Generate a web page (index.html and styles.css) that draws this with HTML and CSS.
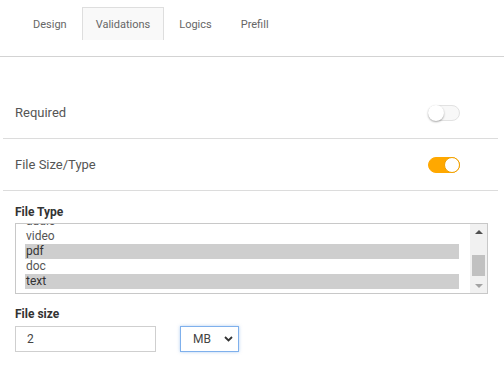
FILE: index.html
```html
<!DOCTYPE html>
<html>
<head>
<meta charset="utf-8">
<link rel="stylesheet" href="styles.css">
</head>
<body>
<div class="panel">
  <nav class="tabs">
    <div class="tab">Design</div>
    <div class="tab active">Validations</div>
    <div class="tab">Logics</div>
    <div class="tab">Prefill</div>
  </nav>
  <div class="rows">
    <div class="row">
      <span class="row-label">Required</span>
      <span class="toggle"><span class="knob"></span></span>
    </div>
    <div class="row">
      <span class="row-label">File Size/Type</span>
      <span class="toggle on"><span class="knob"></span></span>
    </div>
  </div>
  <div class="fields">
    <div class="field-label">File Type</div>
    <div class="listbox">
      <div class="list-view">
        <div class="list-items">
          <div class="opt">audio</div>
          <div class="opt">video</div>
          <div class="opt sel">pdf</div>
          <div class="opt">doc</div>
          <div class="opt sel">text</div>
        </div>
      </div>
      <div class="scrollbar">
        <span class="arrow up"></span>
        <span class="track"><span class="thumb"></span></span>
        <span class="arrow down"></span>
      </div>
    </div>
    <div class="field-label size-label">File size</div>
    <div class="size-row">
      <div class="text-input">2</div>
      <div class="unit-select">
        <span>MB</span>
        <svg class="chev" width="9" height="6" viewBox="0 0 9 6"><path d="M1 1 L4.5 4.5 L8 1" fill="none" stroke="#333" stroke-width="1.8"/></svg>
      </div>
    </div>
  </div>
</div>
</body>
</html>
```
FILE: styles.css
```css
html, body {
  margin: 0;
  padding: 0;
  background: #fff;
}
body {
  font-family: Roboto, "Liberation Sans", sans-serif;
  color: #555;
  width: 504px;
  height: 368px;
  overflow: hidden;
}
.tabs {
  display: flex;
  padding: 7px 0 16px 19px;
  border-bottom: 1px solid #d3d3d3;
}
.tab {
  height: 33px;
  padding: 0 13px;
  margin-right: 1px;
  display: flex;
  align-items: center;
  font-size: 11px;
  color: #666;
  box-sizing: border-box;
  border: 1px solid transparent;
  border-bottom: none;
}
.tab.active {
  background: #f9f9f9;
  border-color: #dedede;
}
.rows {
  margin: 30px 6px 0 3px;
}
.row {
  height: 51px;
  display: flex;
  align-items: center;
  justify-content: space-between;
  padding: 0 38px 0 12px;
  border-bottom: 1px solid #dcdcdc;
}
.row-label {
  font-size: 13px;
  color: #555;
}
.toggle {
  width: 32px;
  height: 16px;
  box-sizing: border-box;
  border-radius: 8px;
  background: #f8f8f8;
  border: 1px solid #e2e2e2;
  display: flex;
  align-items: center;
  justify-content: flex-start;
}
.knob {
  width: 16px;
  height: 16px;
  box-sizing: border-box;
  margin: -1px;
  border-radius: 50%;
  background: #fff;
  box-shadow: 0 1px 2px rgba(0,0,0,0.35);
}
.toggle.on {
  background: #ffa800;
  border-color: #ffa800;
  justify-content: flex-end;
}
.toggle.on .knob {
  border: 1px solid #f0a000;
  box-shadow: none;
}
.fields {
  padding: 14px 0 0 15px;
}
.field-label {
  font-size: 12px;
  font-weight: bold;
  color: #333;
  line-height: 14px;
  margin-bottom: 4px;
}
.size-label {
  margin-top: 13px;
  margin-bottom: 5px;
}
.listbox {
  width: 473px;
  height: 71px;
  box-sizing: border-box;
  border: 1px solid #c8c8c8;
  display: flex;
}
.list-view {
  flex: 1;
  overflow: hidden;
  padding: 0 11px 0 9px;
}
.list-items {
  margin-top: -10px;
}
.opt {
  height: 15px;
  line-height: 15px;
  font-size: 12px;
  color: #555;
  padding-left: 1px;
}
.opt.sel {
  background: #cecece;
  color: #333;
}
.scrollbar {
  width: 17px;
  background: #f1f1f1;
  display: flex;
  flex-direction: column;
  align-items: center;
}
.arrow {
  width: 0;
  height: 0;
  border-left: 4px solid transparent;
  border-right: 4px solid transparent;
}
.arrow.up {
  margin-top: 6px;
  border-bottom: 4px solid #505050;
}
.arrow.down {
  margin-bottom: 5px;
  border-top: 4px solid #a3a3a3;
}
.track {
  flex: 1;
  width: 100%;
  display: flex;
  justify-content: center;
}
.thumb {
  width: 13px;
  height: 21px;
  margin-top: 21px;
  background: #c1c1c1;
}
.size-row {
  display: flex;
  align-items: center;
  gap: 24px;
}
.text-input {
  width: 141px;
  height: 26px;
  box-sizing: border-box;
  border: 1px solid #cfcfcf;
  font-size: 12px;
  color: #444;
  padding-left: 11px;
  display: flex;
  align-items: center;
}
.unit-select {
  width: 59px;
  height: 26px;
  box-sizing: border-box;
  border: 1px solid #7fb0ec;
  box-shadow: 0 0 3px rgba(100,160,230,0.5);
  font-size: 12px;
  color: #444;
  display: flex;
  align-items: center;
  justify-content: space-between;
  padding: 0 5px 0 12px;
}
```
